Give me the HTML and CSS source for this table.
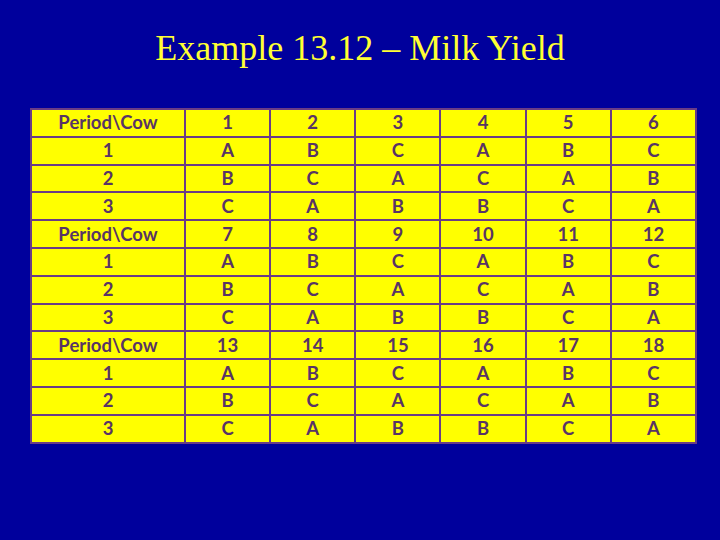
FILE: index.html
```html
<!DOCTYPE html>
<html>
<head>
<meta charset="utf-8">
<link rel="stylesheet" href="styles.css">
</head>
<body>
<div class="slide">
  <h1 class="title">Example 13.12 – Milk Yield</h1>
  <table class="grid">
    <tr><td>Period\Cow</td><td>1</td><td>2</td><td>3</td><td>4</td><td>5</td><td>6</td></tr>
    <tr><td>1</td><td>A</td><td>B</td><td>C</td><td>A</td><td>B</td><td>C</td></tr>
    <tr><td>2</td><td>B</td><td>C</td><td>A</td><td>C</td><td>A</td><td>B</td></tr>
    <tr><td>3</td><td>C</td><td>A</td><td>B</td><td>B</td><td>C</td><td>A</td></tr>
    <tr><td>Period\Cow</td><td>7</td><td>8</td><td>9</td><td>10</td><td>11</td><td>12</td></tr>
    <tr><td>1</td><td>A</td><td>B</td><td>C</td><td>A</td><td>B</td><td>C</td></tr>
    <tr><td>2</td><td>B</td><td>C</td><td>A</td><td>C</td><td>A</td><td>B</td></tr>
    <tr><td>3</td><td>C</td><td>A</td><td>B</td><td>B</td><td>C</td><td>A</td></tr>
    <tr><td>Period\Cow</td><td>13</td><td>14</td><td>15</td><td>16</td><td>17</td><td>18</td></tr>
    <tr><td>1</td><td>A</td><td>B</td><td>C</td><td>A</td><td>B</td><td>C</td></tr>
    <tr><td>2</td><td>B</td><td>C</td><td>A</td><td>C</td><td>A</td><td>B</td></tr>
    <tr><td>3</td><td>C</td><td>A</td><td>B</td><td>B</td><td>C</td><td>A</td></tr>
  </table>
</div>
</body>
</html>
```

FILE: styles.css
```css
html, body {
  margin: 0;
  padding: 0;
  background: #00009c;
}
.slide {
  width: 720px;
  height: 540px;
  box-sizing: border-box;
  padding-top: 27px;
  background: #00009c;
}
.title {
  margin: 0;
  text-align: center;
  font-family: "Liberation Serif", "Times New Roman", serif;
  font-weight: normal;
  font-size: 36px;
  line-height: 42px;
  color: #ffff33;
}
.grid {
  margin: 39px 0 0 30px;
  border-collapse: collapse;
  table-layout: fixed;
  width: 667px;
}
.grid td {
  background: #ffff00;
  border: 2.5px solid #6a3c86;
  height: 25.8px;
  padding: 0;
  text-align: center;
  vertical-align: middle;
  font-family: Lato, "Open Sans", sans-serif;
  font-weight: bold;
  font-size: 18.5px;
  color: #583466;
  line-height: 25px;
}
.grid td:first-child {
  width: 152px;
}
```
